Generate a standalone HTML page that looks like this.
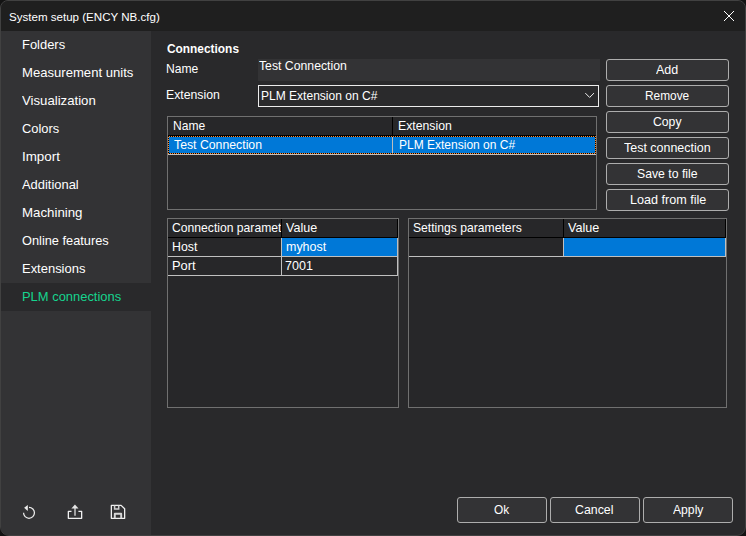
<!DOCTYPE html>
<html>
<head>
<meta charset="utf-8">
<title>System setup</title>
<style>
html,body{margin:0;padding:0;background:#131313;}
body{width:746px;height:536px;overflow:hidden;position:relative;font-family:"Liberation Sans",sans-serif;font-size:13px;color:#fff;}
#win{position:absolute;left:0;top:0;width:744px;height:534px;border:1px solid #414141;border-radius:8px 8px 9px 9px;background:#29292b;overflow:hidden;}
#win>*{position:absolute;}
#title{left:0;top:0;width:744px;height:30px;background:#1f1f1f;}
#side{left:0;top:30px;width:150px;height:504px;background:#333335;}
#sel{left:0;top:282px;width:150px;height:28px;background:#29292b;}
.t{position:absolute;white-space:pre;line-height:16px;height:16px;transform-origin:0 0;}
.g{color:#16d48e;}
.b{font-weight:bold;}
.btn{position:absolute;box-sizing:border-box;border:1px solid #adadad;border-radius:3px;background:#333335;}
.box{position:absolute;box-sizing:border-box;border:1px solid #707070;background:#272729;}
.ln{position:absolute;}
</style>
</head>
<body>
<div id="win">
  <div id="title"></div>
  <div id="side"></div>
  <div id="sel"></div>
</div>
<div class="t" id="ttl" style="left:8.61px;top:9px;font-size:11.7px;transform:scaleX(0.9891);">System setup (ENCY NB.cfg)</div>
<svg style="position:absolute;left:722px;top:9px" width="14" height="14" viewBox="0 0 14 14"><path d="M2 2 L12 12 M12 2 L2 12" stroke="#fff" stroke-width="1" fill="none"/></svg>

<div class="t" id="s0" style="left:21.61px;top:37px;transform:scaleX(0.9952);">Folders</div>
<div class="t" id="s1" style="left:21.59px;top:65px;transform:scaleX(1.0073);">Measurement units</div>
<div class="t" id="s2" style="left:21.90px;top:93px;transform:scaleX(1.0139);">Visualization</div>
<div class="t" id="s3" style="left:21.86px;top:121px;transform:scaleX(0.9903);">Colors</div>
<div class="t" id="s4" style="left:22.30px;top:149px;transform:scaleX(1.0300);">Import</div>
<div class="t" id="s5" style="left:21.80px;top:177px;transform:scaleX(0.9938);">Additional</div>
<div class="t" id="s6" style="left:21.72px;top:205px;transform:scaleX(1.0209);">Machining</div>
<div class="t" id="s7" style="left:22.36px;top:233px;transform:scaleX(0.9834);">Online features</div>
<div class="t" id="s8" style="left:21.60px;top:261px;transform:scaleX(0.9968);">Extensions</div>
<div class="t g" id="s9" style="left:21.51px;top:289px;transform:scaleX(0.9944);">PLM connections</div>

<div class="t b" id="c0" style="left:166.54px;top:41px;transform:scaleX(0.9145);">Connections</div>
<div class="t" id="c1" style="left:166.22px;top:61px;transform:scaleX(0.9303);">Name</div>
<div class="t" id="c2" style="left:166.36px;top:87px;transform:scaleX(0.9430);">Extension</div>

<div id="nm" style="position:absolute;left:258px;top:59px;width:342px;height:22px;background:#333335;"></div>
<div class="t" id="c3" style="left:258.80px;top:58px;transform:scaleX(0.9420);">Test Connection</div>
<div id="dd" style="position:absolute;left:258px;top:85px;width:341px;height:22px;box-sizing:border-box;border:1px solid #ececec;background:#2a2a2c;"></div>
<div class="t" id="c4" style="left:261.03px;top:88px;transform:scaleX(0.9251);">PLM Extension on C#</div>
<svg style="position:absolute;left:583px;top:90px" width="14" height="10" viewBox="0 0 14 10"><path d="M2.3 3.1 L6.65 7.45 L11 3.1" stroke="#f0f0f0" stroke-width="1" fill="none"/></svg>

<div class="btn" style="left:606px;top:59px;width:123px;height:22px;"></div>
<div class="btn" style="left:606px;top:85px;width:123px;height:22px;"></div>
<div class="btn" style="left:606px;top:111px;width:123px;height:22px;"></div>
<div class="btn" style="left:606px;top:137px;width:123px;height:22px;"></div>
<div class="btn" style="left:606px;top:163px;width:123px;height:22px;"></div>
<div class="btn" style="left:606px;top:189px;width:123px;height:22px;"></div>
<div class="t" id="b0" style="left:656.10px;top:62px;transform:scaleX(0.9618);">Add</div>
<div class="t" id="b1" style="left:645.24px;top:88px;transform:scaleX(0.9134);">Remove</div>
<div class="t" id="b2" style="left:653.20px;top:114px;transform:scaleX(0.9390);">Copy</div>
<div class="t" id="b3" style="left:624.26px;top:140px;transform:scaleX(0.9591);">Test connection</div>
<div class="t" id="b4" style="left:637.39px;top:166px;transform:scaleX(0.9413);">Save to file</div>
<div class="t" id="b5" style="left:629.88px;top:192px;transform:scaleX(0.9683);">Load from file</div>

<!-- connections table -->
<div class="box" id="g0" style="left:167px;top:116px;width:430px;height:94px;"></div>
<div class="ln" style="left:168px;top:135px;width:428px;height:1px;background:#000"></div>
<div class="ln" style="left:392px;top:117px;width:1px;height:18px;background:#000"></div>
<div class="ln" style="left:168px;top:136px;width:428px;height:18px;background:#000;"></div>
<div class="ln" style="left:169px;top:137px;width:426px;height:16px;background:#0078d7;"></div>
<div class="ln" style="left:168px;top:136px;width:428px;height:1px;background:repeating-linear-gradient(90deg,#000 0 1px,#ff8728 1px 2px)"></div>
<div class="ln" style="left:168px;top:153px;width:428px;height:1px;background:repeating-linear-gradient(90deg,#ff8728 0 1px,#000 1px 2px)"></div>
<div class="ln" style="left:168px;top:136px;width:1px;height:18px;background:repeating-linear-gradient(180deg,#000 0 1px,#ff8728 1px 2px)"></div>
<div class="ln" style="left:595px;top:136px;width:1px;height:18px;background:repeating-linear-gradient(180deg,#ff8728 0 1px,#000 1px 2px)"></div>
<div class="ln" style="left:392px;top:137px;width:1px;height:16px;background:#bdbdbd"></div>
<div class="ln" style="left:168px;top:154px;width:428px;height:1px;background:#c0c0c0"></div>
<div class="t" id="h0" style="left:173.12px;top:118px;transform:scaleX(0.9273);">Name</div>
<div class="t" id="h1" style="left:398.36px;top:118px;transform:scaleX(0.9430);">Extension</div>
<div class="t" id="r0" style="left:174.16px;top:137px;transform:scaleX(0.9442);">Test Connection</div>
<div class="t" id="r1" style="left:399.08px;top:137px;transform:scaleX(0.9234);">PLM Extension on C#</div>

<!-- params grid -->
<div class="box" id="g1" style="left:167px;top:218px;width:232px;height:190px;"></div>
<div class="ln" style="left:168px;top:237px;width:230px;height:1px;background:#000"></div>
<div class="ln" style="left:281px;top:219px;width:1px;height:18px;background:#000"></div>
<div class="ln" style="left:397px;top:219px;width:1px;height:18px;background:#000"></div>
<div class="ln" style="left:282px;top:238px;width:115px;height:18px;background:#0078d7"></div>
<div class="ln" style="left:168px;top:256px;width:230px;height:1px;background:#c0c0c0"></div>
<div class="ln" style="left:168px;top:275px;width:230px;height:1px;background:#c0c0c0"></div>
<div class="ln" style="left:281px;top:238px;width:1px;height:37px;background:#c0c0c0"></div>
<div class="ln" style="left:397px;top:238px;width:1px;height:37px;background:#c0c0c0"></div>
<div class="ln" id="p0clip" style="left:168px;top:219px;width:113px;height:18px;overflow:hidden;"><div class="t" id="p0" style="left:3.80px;top:1px;transform:scaleX(0.9348);">Connection parameters</div></div>
<div class="t" id="p1" style="left:285.95px;top:220px;transform:scaleX(0.9638);">Value</div>
<div class="t" id="p2" style="left:171.70px;top:239px;transform:scaleX(0.9476);">Host</div>
<div class="t" id="p3" style="left:286.03px;top:239px;transform:scaleX(0.9585);">myhost</div>
<div class="t" id="p4" style="left:171.51px;top:258px;transform:scaleX(0.9890);">Port</div>
<div class="t" id="p5" style="left:285.02px;top:258px;transform:scaleX(0.9636);">7001</div>

<!-- settings grid -->
<div class="box" id="g2" style="left:408px;top:218px;width:319px;height:190px;"></div>
<div class="ln" style="left:409px;top:237px;width:317px;height:1px;background:#000"></div>
<div class="ln" style="left:563px;top:219px;width:1px;height:18px;background:#000"></div>
<div class="ln" style="left:725px;top:219px;width:1px;height:18px;background:#000"></div>
<div class="ln" style="left:564px;top:238px;width:161px;height:18px;background:#0078d7"></div>
<div class="ln" style="left:409px;top:256px;width:317px;height:1px;background:#c0c0c0"></div>
<div class="ln" style="left:563px;top:238px;width:1px;height:18px;background:#c0c0c0"></div>
<div class="ln" style="left:725px;top:238px;width:1px;height:18px;background:#c0c0c0"></div>
<div class="t" id="q0" style="left:412.66px;top:220px;transform:scaleX(0.9348);">Settings parameters</div>
<div class="t" id="q1" style="left:567.91px;top:220px;transform:scaleX(0.9701);">Value</div>

<!-- bottom buttons -->
<div class="btn" style="left:457px;top:497px;width:90px;height:26px;"></div>
<div class="btn" style="left:550px;top:497px;width:90px;height:26px;"></div>
<div class="btn" style="left:643px;top:497px;width:90px;height:26px;"></div>
<div class="t" id="b6" style="left:494.08px;top:502px;transform:scaleX(0.9125);">Ok</div>
<div class="t" id="b7" style="left:575.14px;top:502px;transform:scaleX(0.9497);">Cancel</div>
<div class="t" id="b8" style="left:672.96px;top:502px;transform:scaleX(0.9354);">Apply</div>

<!-- bottom-left icons -->
<svg id="i0" style="position:absolute;left:20px;top:503px" width="18" height="18" viewBox="0 0 18 18"><path d="M9.0 4.35 A5.45 5.45 0 1 1 3.55 9.8" stroke="#ececec" stroke-width="1.25" fill="none"/><path d="M4.1 4.85 L7.8 1.9 L7.8 7.9 Z" fill="#ececec"/></svg>
<svg id="i1" style="position:absolute;left:66px;top:503px" width="18" height="18" viewBox="0 0 18 18"><path d="M5.5 8.35 H2.35 V15.35 H15.65 V8.35 H12.4" stroke="#f0f0f0" stroke-width="1.3" fill="none" stroke-linejoin="round"/><path d="M9 5 V12.7" stroke="#b0b0b0" stroke-width="1.8"/><path d="M5.4 5.6 L8.95 1.4 L12.5 5.6 Z" fill="#e6e6e6"/></svg>
<svg id="i2" style="position:absolute;left:109px;top:503px" width="18" height="18" viewBox="0 0 18 18"><path d="M2.35 2.35 H12.1 L15.65 5.8 V15.35 H2.35 Z" stroke="#f0f0f0" stroke-width="1.3" fill="none" stroke-linejoin="round"/><path d="M5.6 2.6 V6 H9.7 V2.6" stroke="#cfcfcf" stroke-width="1.5" fill="none"/><path d="M5.8 15.2 V10.7 H12.2 V15.2" stroke="#d6d6d6" stroke-width="1.9" fill="none" stroke-linejoin="round"/></svg>
</body>
</html>
